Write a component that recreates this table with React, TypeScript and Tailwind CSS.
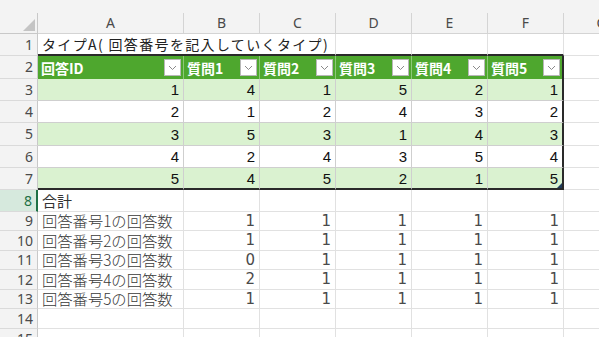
import React from "react";

const GRID = "grid grid-cols-[38px_146px_76px_76px_76px_76px_76px_76px]";
const JP = "font-['Noto_Sans_CJK_JP','Noto_Sans',sans-serif]";
const NUM = "font-['Liberation_Sans','Noto_Sans',sans-serif]";

const heads = ["回答ID", "質問1", "質問2", "質問3", "質問4", "質問5"];
const body = [
  [1, 4, 1, 5, 2, 1],
  [2, 1, 2, 4, 3, 2],
  [3, 5, 3, 1, 4, 3],
  [4, 2, 4, 3, 5, 4],
  [5, 4, 5, 2, 1, 5],
];
const counts = [
  [1, 1, 1, 1, 1],
  [1, 1, 1, 1, 1],
  [0, 1, 1, 1, 1],
  [2, 1, 1, 1, 1],
  [1, 1, 1, 1, 1],
];
const bodyHeights = ["h-[22px]", "h-[22px]", "h-[23px]", "h-[22px]", "h-[22px]"];
const countHeights = ["h-[19px]", "h-[20px]", "h-[19px]", "h-[20px]", "h-[19px]"];

function RowHead({ n, active = false }: { n: number; active?: boolean }) {
  return (
    <div
      className={
        "flex items-center justify-end pr-[4px] text-[14px] leading-none border-b border-[#dadada] " +
        (active
          ? "bg-[#d6e9dd] text-[#1e7145] border-r-2 border-r-[#1e7145]"
          : "bg-[#f3f3f3] text-[#4a4a4a] border-r border-r-[#c8c8c8]") +
        " font-['Noto_Sans',sans-serif]"
      }
    >
      {n}
    </div>
  );
}

function FilterButton() {
  return (
    <div className="w-[17px] h-[17px] bg-white border border-[#b8b8b8] flex items-center justify-center shrink-0">
      <svg width="9" height="6" viewBox="0 0 9 6">
        <polyline points="1,1 4.5,4.5 8,1" fill="none" stroke="#8a8a8a" strokeWidth="1" />
      </svg>
    </div>
  );
}

export default function App() {
  return (
    <div className="w-[599px] h-[337px] overflow-hidden bg-white select-none">
      {/* strip above column headers */}
      <div className="h-[13px] bg-[#f3f3f3]" />
      {/* column letters */}
      <div className={GRID + " h-[21px] bg-[#f3f3f3] font-['Noto_Sans',sans-serif] text-[14px] leading-none text-[#4a4a4a]"}>
        <div className="relative border-r border-b border-[#c8c8c8]">
          <svg className="absolute right-[2px] bottom-[2px]" width="12" height="12" viewBox="0 0 12 12">
            <polygon points="12,0 12,12 0,12" fill="#c4c4c4" />
          </svg>
        </div>
        {["A", "B", "C", "D", "E", "F", "G"].map((c) => (
          <div key={c} className="flex items-center justify-center border-r border-b border-[#d4d4d4]">
            {c}
          </div>
        ))}
      </div>

      {/* row 1: title */}
      <div className={GRID + " h-[22px]"}>
        <RowHead n={1} />
        <div className={"border-b-2 border-b-[#2a2a2a] flex items-center pl-[4px] whitespace-nowrap overflow-visible text-[14px] leading-none tracking-[1.35px] text-[#222] " + JP}>
          <span className="relative z-10">タイプA( 回答番号を記入していくタイプ)</span>
        </div>
        <div className="border-b-2 border-b-[#2a2a2a]" />
        <div className="border-r border-[#e1e1e1] border-b-2 border-b-[#2a2a2a]" />
        <div className="border-r border-[#e1e1e1] border-b-2 border-b-[#2a2a2a]" />
        <div className="border-r border-[#e1e1e1] border-b-2 border-b-[#2a2a2a]" />
        <div className="border-r border-[#e1e1e1] border-b-2 border-b-[#2a2a2a]" />
        <div className="border-r border-b border-[#e1e1e1]" />
      </div>

      {/* row 2: table header */}
      <div className={GRID + " h-[23px]"}>
        <RowHead n={2} />
        {heads.map((h, i) => (
          <div
            key={h}
            className={
              "bg-[#4ea72e] flex items-center justify-between pl-[3px] pr-[2px] text-white font-bold text-[14px] leading-none " +
              JP +
              (i === 5 ? " border-r-2 border-r-[#2a2a2a]" : " border-r border-r-[#8cc877]")
            }
          >
            <span>{h}</span>
            <FilterButton />
          </div>
        ))}
        <div className="border-r border-b border-[#e1e1e1]" />
      </div>

      {/* rows 3-7: table body */}
      {body.map((r, ri) => {
        const band = ri % 2 === 0;
        const last = ri === body.length - 1;
        return (
          <div key={ri} className={GRID + " " + bodyHeights[ri]}>
            <RowHead n={ri + 3} />
            {r.map((v, ci) => (
              <div
                key={ci}
                className={
                  "relative flex items-center justify-end pr-[4px] text-[15px] leading-none text-[#111] " +
                  NUM +
                  (band ? " bg-[#daf2d0]" : " bg-white") +
                  (ci === 5 ? " border-r-2 border-r-[#2a2a2a]" : " border-r border-r-[#cfcfcf]") +
                  (last ? " border-b-2 border-b-[#2a2a2a]" : " border-b border-b-[#cfcfcf]")
                }
              >
                {v}
                {last && ci === 5 && (
                  <svg className="absolute right-0 bottom-0" width="5" height="5" viewBox="0 0 5 5">
                    <polygon points="5,0 5,5 0,5" fill="#1f3a5a" />
                  </svg>
                )}
              </div>
            ))}
            <div className="border-r border-b border-[#e1e1e1]" />
          </div>
        );
      })}

      {/* row 8: total */}
      <div className={GRID + " h-[22px]"}>
        <RowHead n={8} active />
        <div className={"flex items-center pl-[4px] text-[15px] leading-none text-[#333] border-r border-b border-[#e1e1e1] " + JP}>合計</div>
        {[0, 1, 2, 3, 4, 5].map((k) => (
          <div key={k} className="border-r border-b border-[#e1e1e1]" />
        ))}
      </div>

      {/* rows 9-13: answer counts */}
      {counts.map((r, ri) => (
        <div key={ri} className={GRID + " " + countHeights[ri]}>
          <RowHead n={ri + 9} />
          <div className={"flex items-center pl-[4px] text-[15.3px] leading-none font-light text-[#3a3a3a] whitespace-nowrap border-r border-b border-[#e1e1e1] " + JP}>
            {`回答番号${ri + 1}の回答数`}
          </div>
          {r.map((v, ci) => (
            <div
              key={ci}
              className="flex items-center justify-end pr-[4px] text-[15px] leading-none text-[#4a4a4a] font-['DejaVu_Sans',sans-serif] border-r border-b border-[#e1e1e1]"
            >
              {v}
            </div>
          ))}
          <div className="border-r border-b border-[#e1e1e1]" />
        </div>
      ))}

      {/* rows 14-15: empty */}
      <div className={GRID + " h-[20px]"}>
        <RowHead n={14} />
        {[0, 1, 2, 3, 4, 5, 6].map((k) => (
          <div key={k} className="border-r border-b border-[#e1e1e1]" />
        ))}
      </div>
      <div className={GRID + " h-[20px]"}>
        <RowHead n={15} />
        {[0, 1, 2, 3, 4, 5, 6].map((k) => (
          <div key={k} className="border-r border-b border-[#e1e1e1]" />
        ))}
      </div>
    </div>
  );
}
